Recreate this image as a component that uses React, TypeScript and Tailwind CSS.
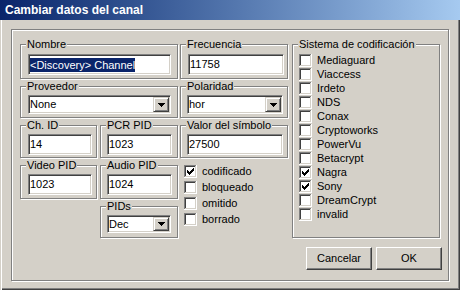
import type { ReactNode } from 'react';

// bordes estilo Windows 2000
const sunken =
  'border border-t-[#808080] border-l-[#808080] border-b-white border-r-white shadow-[inset_1px_1px_0_#404040,inset_-1px_-1px_0_#d4d0c8]';
const etched = 'border border-[#808080] shadow-[inset_1px_1px_0_#fff,1px_1px_0_#fff]';

const SISTEMAS: [string, boolean][] = [
  ['Mediaguard', false],
  ['Viaccess', false],
  ['Irdeto', false],
  ['NDS', false],
  ['Conax', false],
  ['Cryptoworks', false],
  ['PowerVu', false],
  ['Betacrypt', false],
  ['Nagra', true],
  ['Sony', true],
  ['DreamCrypt', false],
  ['invalid', false],
];

const FLAGS: [string, boolean][] = [
  ['codificado', true],
  ['bloqueado', false],
  ['omitido', false],
  ['borrado', false],
];

function Group({ label, className = '', children }: { label: string; className?: string; children?: ReactNode }) {
  return (
    <fieldset className={`${etched} ${className}`}>
      <legend className="ml-[5px] px-px leading-[13px] bg-[#d4d0c8]">{label}</legend>
      {children}
    </fieldset>
  );
}

function Field({ className = '', children }: { className?: string; children?: ReactNode }) {
  return <div className={`h-[21px] bg-white ${sunken} flex items-center pl-px ${className}`}>{children}</div>;
}

function Arrow() {
  return (
    <svg width="7" height="4" shapeRendering="crispEdges">
      <rect x="0" y="0" width="7" height="1" fill="#000" />
      <rect x="1" y="1" width="5" height="1" fill="#000" />
      <rect x="2" y="2" width="3" height="1" fill="#000" />
      <rect x="3" y="3" width="1" height="1" fill="#000" />
    </svg>
  );
}

function Combo({ value, className = '' }: { value: string; className?: string }) {
  return (
    <div className={`flex bg-white p-px ${sunken} ${className}`}>
      <span className="flex-1 flex items-center">{value}</span>
      <span className="w-[16px] flex items-center justify-center bg-[#d4d0c8] border border-t-[#d4d0c8] border-l-[#d4d0c8] border-b-[#404040] border-r-[#404040] shadow-[inset_1px_1px_0_#fff,inset_-1px_-1px_0_#808080]">
        <Arrow />
      </span>
    </div>
  );
}

function CheckBox({ checked }: { checked: boolean }) {
  const tops = [2, 3, 4, 3, 2, 1, 0];
  return (
    <svg width="13" height="13" shapeRendering="crispEdges" className="shrink-0">
      <rect x="0" y="0" width="13" height="13" fill="#fff" />
      <rect x="0" y="0" width="12" height="1" fill="#808080" />
      <rect x="0" y="0" width="1" height="12" fill="#808080" />
      <rect x="1" y="1" width="10" height="1" fill="#404040" />
      <rect x="1" y="1" width="1" height="10" fill="#404040" />
      <rect x="1" y="11" width="11" height="1" fill="#d4d0c8" />
      <rect x="11" y="1" width="1" height="11" fill="#d4d0c8" />
      {checked &&
        tops.map((t, i) => <rect key={i} x={3 + i} y={3 + t} width="1" height="3" fill="#000" />)}
    </svg>
  );
}

function Button({ label }: { label: string }) {
  return (
    <div className="w-[66px] h-[23px] flex items-center justify-center bg-[#d4d0c8] border border-t-white border-l-white border-b-[#404040] border-r-[#404040] shadow-[inset_-1px_-1px_0_#808080]">
      {label}
    </div>
  );
}

export default function App() {
  return (
    <div className="w-[460px] h-[290px] bg-[#d4d0c8] flex flex-col font-['Liberation_Sans',Arial,sans-serif] text-[11px] text-black shadow-[inset_1px_0_0_#d4d0c8,inset_2px_0_0_#fff,inset_-1px_-1px_0_#404040,inset_-2px_-2px_0_#808080]">
      {/* barra de título */}
      <div className="h-[20px] w-full flex items-center pl-[5px] bg-gradient-to-r from-[#0a246a] to-[#a6caf0]">
        <span className="text-white font-bold text-[12px]">Cambiar datos del canal</span>
      </div>

      {/* panel principal */}
      <div className={`ml-[11px] mt-[9px] w-[438px] h-[252px] pl-[8px] pt-[8px] flex ${etched}`}>
        {/* columna izquierda */}
        <div className="w-[158px] flex flex-col gap-px">
          <Group label="Nombre">
            <div className="pl-[7px] pt-[3px] pb-[3px]">
              <Field className="w-[143px]">
                <span className="bg-[#0a246a] text-white leading-[14px]">&lt;Discovery&gt; Channel</span>
              </Field>
            </div>
          </Group>
          <Group label="Proveedor">
            <div className="pl-[7px] pt-[2px] pb-[3px]">
              <Combo value="None" className="w-[143px] h-[19px]" />
            </div>
          </Group>
          <div className="flex gap-[3px]">
            <Group label="Ch. ID" className="w-[77px]">
              <div className="pl-[7px] pt-[2px] pb-[2px]">
                <Field className="w-[64px]">14</Field>
              </div>
            </Group>
            <Group label="PCR PID" className="w-[78px]">
              <div className="pl-[6px] pt-[2px] pb-[2px]">
                <Field className="w-[65px]">1023</Field>
              </div>
            </Group>
          </div>
          <div className="flex gap-[3px]">
            <Group label="Video PID" className="w-[77px]">
              <div className="pl-[7px] pt-[2px] pb-[3px]">
                <Field className="w-[64px]">1023</Field>
              </div>
            </Group>
            <Group label="Audio PID" className="w-[78px]">
              <div className="pl-[6px] pt-[2px] pb-[3px]">
                <Field className="w-[65px]">1024</Field>
              </div>
            </Group>
          </div>
          <Group label="PIDs" className="ml-[80px] w-[78px]">
            <div className="pl-[6px] pt-[2px] pb-[4px]">
              <Combo value="Dec" className="w-[64px] h-[18px]" />
            </div>
          </Group>
        </div>

        {/* columna central */}
        <div className="ml-[2px] w-[108px] flex flex-col gap-px">
          <Group label="Frecuencia">
            <div className="pl-[7px] pt-[3px] pb-[3px]">
              <Field className="w-[96px]">11758</Field>
            </div>
          </Group>
          <Group label="Polaridad">
            <div className="pl-[6px] pt-[2px] pb-[3px]">
              <Combo value="hor" className="w-[96px] h-[19px]" />
            </div>
          </Group>
          <Group label="Valor del símbolo">
            <div className="pl-[6px] pt-[2px] pb-[2px]">
              <Field className="w-[96px]">27500</Field>
            </div>
          </Group>
          <div className="pl-[4px] pt-[4px] flex flex-col">
            {FLAGS.map(([name, on]) => (
              <div key={name} className="h-[16px] pt-[2px] flex items-start gap-[5px]">
                <CheckBox checked={on} />
                <span className="leading-[13px]">{name}</span>
              </div>
            ))}
          </div>
        </div>

        {/* columna derecha */}
        <div className="ml-[4px] w-[150px] flex flex-col">
          <Group label="Sistema de codificación" className="w-[148px]">
            <div className="pl-[6px] pt-[3px] pb-[15px] flex flex-col">
              {SISTEMAS.map(([name, on]) => (
                <div key={name} className="h-[14px] flex items-start gap-[5px]">
                  <CheckBox checked={on} />
                  <span className="leading-[13px]">{name}</span>
                </div>
              ))}
            </div>
          </Group>
          <div className="mt-[9px] flex justify-end gap-[4px]">
            <Button label="Cancelar" />
            <Button label="OK" />
          </div>
        </div>
      </div>
    </div>
  );
}
